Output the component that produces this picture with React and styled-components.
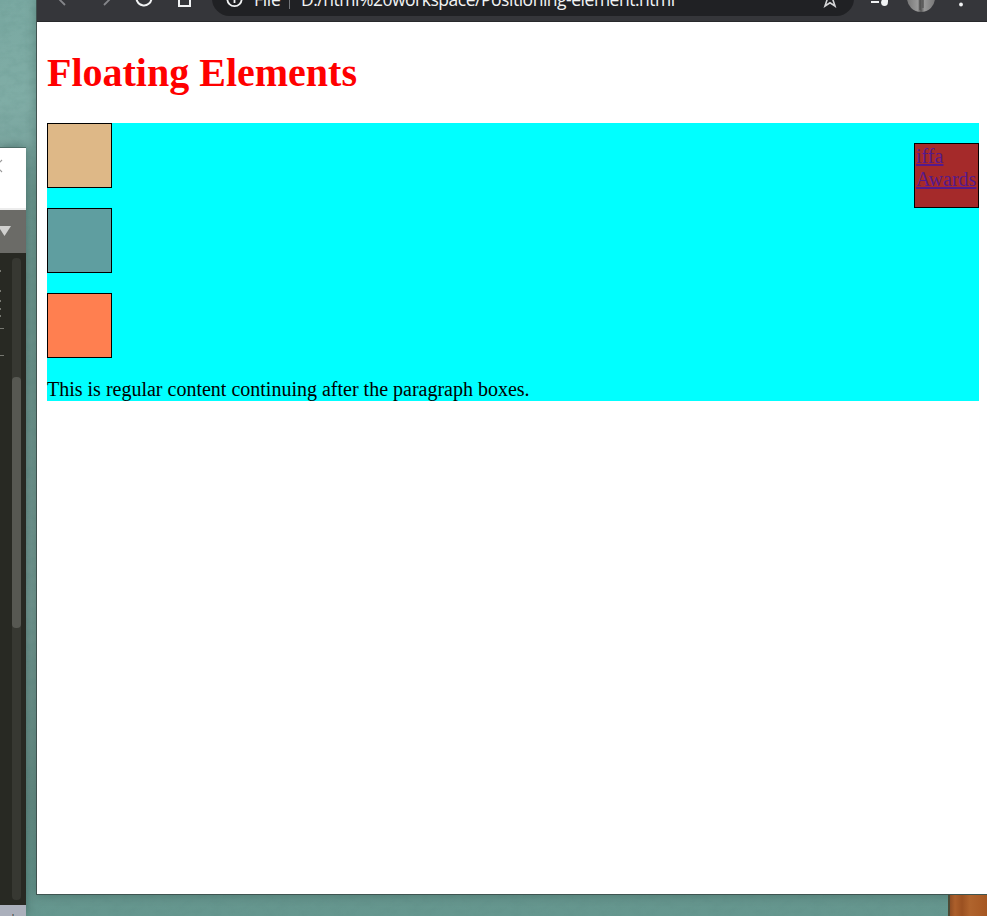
import React from "react";
import styled, { createGlobalStyle } from "styled-components";

const GlobalStyle = createGlobalStyle`
  * { box-sizing: border-box; }
  body { margin: 0; overflow: hidden; }
`;

const plaster = `url("data:image/svg+xml,%3Csvg xmlns='http://www.w3.org/2000/svg' width='300' height='300'%3E%3Cfilter id='n' x='0' y='0' width='100%25' height='100%25'%3E%3CfeTurbulence type='fractalNoise' baseFrequency='.09 .14' numOctaves='3' stitchTiles='stitch'/%3E%3CfeColorMatrix values='0 0 0 0 .1 0 0 0 0 .25 0 0 0 0 .22 .9 0 0 0 -.32'/%3E%3C/filter%3E%3Crect width='300' height='300' filter='url(%23n)' opacity='.45'/%3E%3C/svg%3E")`;

const Desktop = styled.div`
  width: 987px;
  height: 916px;
  overflow: hidden;
  display: grid;
  grid-template-columns: 36px 951px;
  background: ${plaster}, linear-gradient(180deg, #7aa9a2 0, #80ada6 100px, #7aa59f 145px, #6d9991 190px, #70968f 400px, #769a94 600px, #688e87 800px, #65978f 916px);
`;

const EditorEdge = styled.div`
  margin-top: 147px;
  width: 26px;
  height: 769px;
  display: flex;
  flex-direction: column;
  overflow: hidden;
  border-top: 1px solid #4d6c67;
  background: #282923;
  box-shadow: 0 0 10px rgba(0, 30, 25, 0.35);
`;

const EditorTitle = styled.div`
  height: 62px;
  flex: none;
  background: #fff;
  border-bottom: 2px solid #ececec;
  svg { display: block; margin-top: 10px; }
`;

const TabStrip = styled.div`
  height: 43px;
  flex: none;
  background: #6b6b67;
  svg { display: block; }
`;

const CodeArea = styled.div`
  flex: 1;
  display: flex;
  justify-content: space-between;
  padding: 5px 5px 5px 0;
`;

const ScrollTrack = styled.div`
  width: 9px;
  height: 642px;
  padding-top: 119px;
  border-radius: 4px;
  background: #373832;
`;

const ScrollThumb = styled.div`
  height: 251px;
  border-radius: 4px;
  background: #575852;
`;

const StatusBar = styled.div`
  height: 11px;
  flex: none;
  background: #abb0bc;
  svg { display: block; }
`;

const Main = styled.div`
  display: flex;
  flex-direction: column;
  min-width: 0;
`;

const BrowserWindow = styled.div`
  height: 895px;
  flex: none;
  display: flex;
  flex-direction: column;
  overflow: hidden;
  border-left: 1px solid #40524f;
  border-bottom: 1px solid #3f5551;
  background: #fff;
  box-shadow: 0 0 10px rgba(0, 30, 25, 0.25);
`;

const Toolbar = styled.div`
  height: 47px;
  margin-top: -25px;
  flex: none;
  display: flex;
  padding-top: 6px;
  background: #35363a;
  border-bottom: 1px solid #28292c;
`;

const NavIcons = styled.svg`
  width: 175px;
  height: 35px;
  flex: none;
`;

const AddressBar = styled.div`
  width: 642px;
  height: 35px;
  flex: none;
  display: flex;
  align-items: center;
  padding-left: 14px;
  border-radius: 18px;
  background: #202124;
  color: #f1f3f4;
  font: 17.5px/24px "Open Sans", "Noto Sans", sans-serif;
  white-space: nowrap;
  svg { flex: none; }
`;

const Scheme = styled.span`
  flex: none;
  width: 46px;
  padding-left: 11px;
  letter-spacing: -0.3px;
`;

const Divider = styled.span`
  flex: none;
  width: 1px;
  height: 21px;
  background: #74777b;
`;

const Url = styled.span`
  flex: none;
  width: 533px;
  padding-left: 11px;
  letter-spacing: -0.48px;
`;

const Actions = styled.svg`
  width: 133px;
  height: 35px;
  flex: none;
`;

const Page = styled.main`
  flex: 1;
  padding: 27px 8px 0 10px;
  font: 20px/23px "Liberation Serif", "Times New Roman", serif;
  color: #000;
`;

const Heading = styled.h1`
  margin: 0 0 27px;
  font-size: 40px;
  line-height: 47px;
  color: #f00;
`;

const Container = styled.section`
  height: 278px;
  display: flex;
  justify-content: space-between;
  background: #0ff;
`;

const Content = styled.div`
  display: flex;
  flex-direction: column;
  gap: 20px;
`;

const Box = styled.div`
  width: 65px;
  height: 65px;
  flex: none;
  border: 1px solid #000;
  background: ${({ $color }) => $color};
`;

const LinkBox = styled(Box)`
  margin-top: 20px;
  padding: 1px;
`;

const VisitedLink = styled.a`
  color: #551a8b;
  text-decoration: underline;
`;

const Paragraph = styled.p`
  margin: 0;
  white-space: nowrap;
`;

const WoodEdge = styled.div`
  flex: 1;
  width: 39px;
  align-self: flex-end;
  border-left: 2px solid #4d4a35;
  background: linear-gradient(90deg, #8f4d23, #ac5f2b 5px, #9b5121 12px, #b0642d 20px, #a65722);
`;

export default function App() {
  return (
    <>
      <GlobalStyle />
      <Desktop>
        <EditorEdge>
          <EditorTitle>
            <svg width="8" height="16" viewBox="0 0 8 16" fill="none" stroke="#999" strokeWidth="1.2">
              <path d="M2 2-4 8l6 6" />
            </svg>
          </EditorTitle>
          <TabStrip>
            <svg width="26" height="43">
              <path d="M-2 16h13l-6.5 10z" fill="#d0d0ce" />
            </svg>
          </TabStrip>
          <CodeArea>
            <svg width="5" height="110" fill="#777871">
              <path d="M0 12h1v2H0zM0 32h1v2H0zM0 42h1v2H0zM0 50h1v2H0zM0 57h1v2H0zM0 70h4v1H0zM0 97h4v1H0z" />
            </svg>
            <ScrollTrack><ScrollThumb /></ScrollTrack>
          </CodeArea>
          <StatusBar>
            <svg width="26" height="11">
              <path d="M12 9h1v2h-1z" fill="#9d7564" />
              <path d="M13 9h1v2h-1z" fill="#557e91" />
            </svg>
          </StatusBar>
        </EditorEdge>
        <Main>
          <BrowserWindow>
            <Toolbar>
              <NavIcons viewBox="0 -19 175 35" fill="none">
                <path d="M28 5l-7-7 7-7M67 5l7-7-7-7" stroke="#85868a" strokeWidth="1.8" />
                <path d="M114.5-2a7.5 7.5 0 1 1-3-6" stroke="#f1f3f4" strokeWidth="2" />
                <path d="M142-8v14h11V-8" stroke="#f1f3f4" strokeWidth="2" />
              </NavIcons>
              <AddressBar>
                <svg width="17" height="18" viewBox="0 0 17 18" fill="none" stroke="#f1f3f4" strokeWidth="1.8">
                  <circle cx="8.5" cy="9" r="7.2" />
                  <path d="M8.5 8v5" />
                </svg>
                <Scheme>File</Scheme>
                <Divider />
                <Url>D:/html%20workspace/Positioning-element.html</Url>
                <svg width="14" height="18" viewBox="0 0 14 18" fill="none" stroke="#d5d6d8" strokeWidth="1.6">
                  <path d="M7 1l1.8 5H14l-4 4 2 6-5-3.2L2 16l2-6-4-4h5.2z" />
                </svg>
              </AddressBar>
              <Actions viewBox="854 -19 133 35">
                <defs>
                  <linearGradient id="avatar" x1="0" x2="1">
                    <stop offset="0" stopColor="#777" />
                    <stop offset=".38" stopColor="#999" />
                    <stop offset=".5" stopColor="#555" />
                    <stop offset=".62" stopColor="#999" />
                    <stop offset="1" stopColor="#777" />
                  </linearGradient>
                </defs>
                <path d="M871 1h8v2h-8z" fill="#f1f3f4" />
                <circle cx="884.5" cy="2.5" r="3.4" fill="#f1f3f4" />
                <path d="M886-8h2V2h-2z" fill="#f1f3f4" />
                <circle cx="921" cy="-2" r="14" fill="url(#avatar)" />
                <path d="M920-10v20M923-10v18" fill="none" stroke="#494949" />
                <circle cx="961" cy="4.5" r="1.9" fill="#f1f3f4" />
              </Actions>
            </Toolbar>
            <Page>
              <Heading>Floating Elements</Heading>
              <Container>
                <Content>
                  <Box $color="burlywood" />
                  <Box $color="cadetblue" />
                  <Box $color="coral" />
                  <Paragraph>This is regular content continuing after the paragraph boxes.</Paragraph>
                </Content>
                <LinkBox $color="brown">
                  <VisitedLink href="#awards">iffa Awards</VisitedLink>
                </LinkBox>
              </Container>
            </Page>
          </BrowserWindow>
          <WoodEdge />
        </Main>
      </Desktop>
    </>
  );
}
